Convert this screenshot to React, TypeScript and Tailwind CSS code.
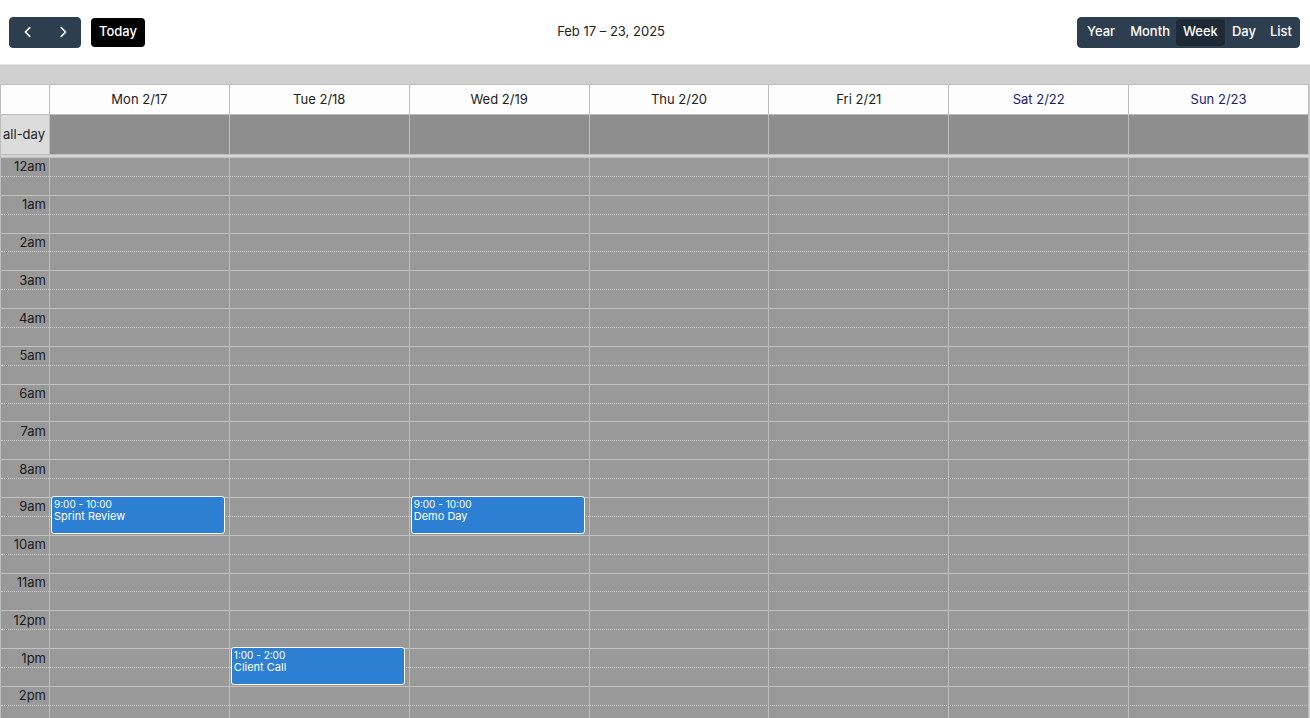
import React from "react";

const days = [
  { label: "Mon 2/17", weekend: false },
  { label: "Tue 2/18", weekend: false },
  { label: "Wed 2/19", weekend: false },
  { label: "Thu 2/20", weekend: false },
  { label: "Fri 2/21", weekend: false },
  { label: "Sat 2/22", weekend: true },
  { label: "Sun 2/23", weekend: true },
];

const hours = Array.from({ length: 24 }, (_, i) => {
  const h = i % 12 === 0 ? 12 : i % 12;
  return `${h}${i < 12 ? "am" : "pm"}`;
});

const events = [
  { col: 0, start: 9, time: "9:00 - 10:00", title: "Sprint Review" },
  { col: 1, start: 13, time: "1:00 - 2:00", title: "Client Call" },
  { col: 2, start: 9, time: "9:00 - 10:00", title: "Demo Day" },
];

const HOUR = 37.8;

function Chevron({ dir }: { dir: "left" | "right" }) {
  return (
    <svg width="14" height="14" viewBox="0 0 16 16" fill="none" stroke="white" strokeWidth="1.8" strokeLinecap="round" strokeLinejoin="round">
      {dir === "left" ? <path d="M10 3 L5 8 L10 13" /> : <path d="M6 3 L11 8 L6 13" />}
    </svg>
  );
}

export default function App() {
  return (
    <div
      className="w-[1310px] h-[718px] overflow-hidden bg-white text-[#222]"
      style={{ fontFamily: "Inter, 'Noto Sans', 'Liberation Sans', sans-serif" }}
    >
      {/* Toolbar */}
      <div className="h-16 flex items-center justify-between pl-[9px] pr-[10px]">
        <div className="flex items-center gap-[10px]">
          <div className="flex h-[31px] rounded-[4px] bg-[#2c3e50] border border-[#2c3e50]">
            <button className="w-[36px] flex items-center justify-center">
              <Chevron dir="left" />
            </button>
            <button className="w-[34px] flex items-center justify-center">
              <Chevron dir="right" />
            </button>
          </div>
          <button className="h-[29px] px-[8px] rounded-[4px] bg-black text-white text-[13px] font-medium">
            Today
          </button>
        </div>
        <div className="text-[13px] text-[#222]">Feb 17 – 23, 2025</div>
        <div className="flex h-[31px] rounded-[4px] bg-[#2c3e50] border border-[#2c3e50] text-white text-[13px] font-medium">
          <button className="px-[9px]">Year</button>
          <button className="px-[6px]">Month</button>
          <button className="px-[7px] rounded-[4px] bg-[#1e2a36] my-[1px]">Week</button>
          <button className="px-[7px]">Day</button>
          <button className="px-[7px]">List</button>
        </div>
      </div>

      {/* Calendar body */}
      <div className="bg-[#cfcfcf] border-t border-[#e6e6e6]">
        <div className="h-[19px]" />
        <div className="w-[1309px] border-l border-[#bdbdbd]">
          {/* Day header */}
          <div className="grid grid-cols-[49px_repeat(7,minmax(0,1fr))] h-[30px] border-t border-[#bdbdbd] bg-[#fdfdfd]">
            <div className="border-r border-[#bdbdbd]" />
            {days.map((d) => (
              <div
                key={d.label}
                className={`border-r border-[#bdbdbd] flex items-center justify-center text-[13px] ${
                  d.weekend ? "text-[#1c1c78]" : "text-[#222]"
                }`}
              >
                {d.label}
              </div>
            ))}
          </div>

          {/* All-day row */}
          <div className="grid grid-cols-[49px_repeat(7,minmax(0,1fr))] h-[40px] border-t border-[#bdbdbd] bg-[#8e8e8e]">
            <div className="border-r border-[#bdbdbd] bg-[#dcdcdc] flex items-center justify-end pr-[4px] text-[13px] text-[#222]">
              all-day
            </div>
            {days.map((d) => (
              <div key={d.label} className="border-r border-[#bdbdbd]" />
            ))}
          </div>

          {/* Divider */}
          <div className="h-[3px] bg-[#d4d4d4] border-t border-[#bdbdbd]" />

          {/* Time grid */}
          <div className="relative bg-[#999999]">
            {hours.map((h) => (
              <React.Fragment key={h}>
                <div className="h-[18.9px] border-t border-[#c3c3c3] flex items-center">
                  <div className="w-[49px] text-right pr-[4px] text-[13px] text-[#1a1a1a] leading-none">{h}</div>
                </div>
                <div className="h-[18.9px] border-t border-dotted border-[#cdcdcd]" />
              </React.Fragment>
            ))}

            {/* Column lines & events overlay */}
            <div className="absolute inset-0 grid grid-cols-[49px_repeat(7,minmax(0,1fr))]">
              <div className="border-r border-[#bdbdbd]" />
              {days.map((d, ci) => (
                <div key={d.label} className="relative border-r border-[#bdbdbd]">
                  {events
                    .filter((e) => e.col === ci)
                    .map((e) => (
                      <div
                        key={e.title}
                        className="absolute left-[1px] right-[4px] h-[38px] bg-[#2c7fd3] border border-white rounded-[3px] px-[2px] pt-[1px] text-white overflow-hidden"
                        style={{ top: e.start * HOUR - 1 }}
                      >
                        <div className="text-[10px] leading-[12px]">{e.time}</div>
                        <div className="text-[11px] leading-[13px]">{e.title}</div>
                      </div>
                    ))}
                </div>
              ))}
            </div>
          </div>
        </div>
      </div>
    </div>
  );
}
